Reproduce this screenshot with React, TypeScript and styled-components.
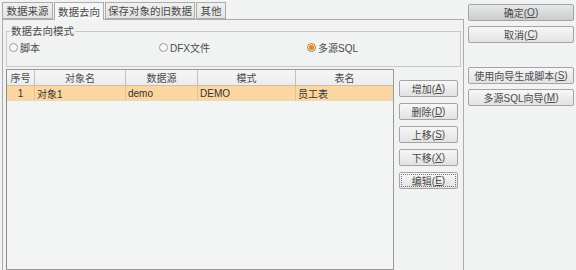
import React from 'react';
import styled, { createGlobalStyle } from 'styled-components';

const GlobalStyle = createGlobalStyle`
  html, body {
    margin: 0;
    padding: 0;
    background: #f1f2f2;
  }
  body {
    font-family: "Liberation Sans", "Noto Sans CJK SC", sans-serif;
    font-size: 10px;
    color: #333;
  }
`;

const Root = styled.div`
  width: 576px;
  height: 270px;
  display: flex;
  overflow: hidden;
  background: #f1f2f2;
`;

const LeftPane = styled.div`
  width: 462px;
  margin-left: 2px;
  display: flex;
  flex-direction: column;
`;

const TabStrip = styled.div`
  height: 19px;
  display: flex;
  align-items: flex-end;
  gap: 1px;
`;

const Tab = styled.div<{ $active?: boolean; $w: number }>`
  width: ${p => p.$w}px;
  height: ${p => (p.$active ? 18 : 17)}px;
  box-sizing: border-box;
  display: flex;
  align-items: center;
  justify-content: center;
  font-size: 10.5px;
  border: 1px solid #acacac;
  border-bottom: ${p => (p.$active ? 'none' : '1px solid #acacac')};
  background: ${p => (p.$active ? '#f5f6f6' : 'linear-gradient(#f0f0f0, #e4e4e4)')};
  color: #4a4a4a;
  margin-bottom: ${p => (p.$active ? '-1px' : '0')};
  position: relative;
  z-index: ${p => (p.$active ? 1 : 0)};
`;

const TabBody = styled.div`
  flex: 1;
  border: 1px solid #acacac;
  border-bottom: none;
  padding: 5px 2px 0 3px;
  display: flex;
  flex-direction: column;
  background: #f1f2f2;
`;

const GroupBox = styled.fieldset`
  margin: 0;
  padding: 3px 0 0 2px;
  border: 1px solid #c8c8c8;
  height: 42px;
  box-sizing: border-box;
  display: flex;
  align-items: center;
`;

const GroupTitle = styled.legend`
  padding: 0 1px;
  margin-left: 1px;
  color: #4a4a4a;
  font-size: 10.5px;
  line-height: 12px;
`;

const RadioRow = styled.div`
  display: grid;
  grid-template-columns: 150px 148px 1fr;
  width: 100%;
  align-items: center;
`;

const RadioItem = styled.label`
  display: flex;
  align-items: center;
  gap: 2px;
  color: #4a4a4a;
`;

const RadioDot = styled.span<{ $checked?: boolean }>`
  width: 7px;
  height: 7px;
  border-radius: 50%;
  border: 1px solid ${p => (p.$checked ? '#b07a3a' : '#9a9a9a')};
  background: ${p => (p.$checked ? 'radial-gradient(circle, #e8892f 0 2.3px, #f6e6d2 2.8px)' : '#fafafa')};
`;

const Body = styled.div`
  flex: 1;
  display: flex;
  gap: 5px;
  margin-top: 2px;
`;

const Table = styled.div`
  width: 388px;
  height: 201px;
  box-sizing: border-box;
  border: 1px solid #9a9a9a;
  border-left-color: #8c8c8c;
  background: #f3f4f4;
`;

const HeaderRow = styled.div`
  display: grid;
  grid-template-columns: 28px 91px 72px 98px 1fr;
  height: 15px;
  background: linear-gradient(#f6f6f6, #ececec);
  border-bottom: 1px solid #c0c0c0;
`;

const HeadCell = styled.div`
  display: flex;
  align-items: center;
  justify-content: center;
  border-right: 1px solid #c0c0c0;
  color: #4a4a4a;
  &:last-child {
    border-right: none;
  }
`;

const DataRow = styled.div`
  display: grid;
  grid-template-columns: 28px 91px 72px 98px 1fr;
  height: 15px;
  background: #fbd6a0;
`;

const Cell = styled.div<{ $center?: boolean }>`
  display: flex;
  align-items: center;
  justify-content: ${p => (p.$center ? 'center' : 'flex-start')};
  padding-left: ${p => (p.$center ? 0 : 2)}px;
  border-right: 1px solid #e0c39a;
  color: #333;
  &:last-child {
    border-right: none;
  }
`;

const SideButtons = styled.div`
  display: flex;
  flex-direction: column;
  gap: 6px;
  padding-top: 11px;
`;

const Button = styled.button<{ $w: number; $primary?: boolean; $focus?: boolean }>`
  width: ${p => p.$w}px;
  height: 17px;
  padding: 0;
  box-sizing: border-box;
  font-family: "Liberation Sans", "Noto Sans CJK SC", sans-serif;
  font-size: 10px;
  color: #4a4a4a;
  border: 1px solid #a4a4a4;
  border-radius: 2px;
  background: ${p =>
    p.$primary ? 'linear-gradient(#e6e8ea, #c9cbce)' : 'linear-gradient(#f7f7f7, #e2e2e2)'};
  outline: ${p => (p.$focus ? '1px dotted #777' : 'none')};
  outline-offset: -3px;
  display: flex;
  align-items: center;
  justify-content: center;
  & u {
    text-decoration: underline;
  }
`;

const RightColumn = styled.div`
  display: flex;
  flex-direction: column;
  margin-left: 4px;
  padding-top: 4px;
  gap: 5px;
`;

const Spacer = styled.div`
  height: 14px;
`;

const columns = ['序号', '对象名', '数据源', '模式', '表名'];

export default function App() {
  return (
    <>
      <GlobalStyle />
      <Root>
        <LeftPane>
          <TabStrip>
            <Tab $w={51}>数据来源</Tab>
            <Tab $w={50} $active>数据去向</Tab>
            <Tab $w={90}>保存对象的旧数据</Tab>
            <Tab $w={30}>其他</Tab>
          </TabStrip>
          <TabBody>
            <GroupBox>
              <GroupTitle>数据去向模式</GroupTitle>
              <RadioRow>
                <RadioItem><RadioDot />脚本</RadioItem>
                <RadioItem><RadioDot />DFX文件</RadioItem>
                <RadioItem><RadioDot $checked />多源SQL</RadioItem>
              </RadioRow>
            </GroupBox>
            <Body>
              <Table>
                <HeaderRow>
                  {columns.map(c => <HeadCell key={c}>{c}</HeadCell>)}
                </HeaderRow>
                <DataRow>
                  <Cell $center>1</Cell>
                  <Cell>对象1</Cell>
                  <Cell>demo</Cell>
                  <Cell>DEMO</Cell>
                  <Cell>员工表</Cell>
                </DataRow>
              </Table>
              <SideButtons>
                <Button $w={59}>增加(<u>A</u>)</Button>
                <Button $w={59}>删除(<u>D</u>)</Button>
                <Button $w={59}>上移(<u>S</u>)</Button>
                <Button $w={59}>下移(<u>X</u>)</Button>
                <Button $w={59} $focus>编辑(<u>E</u>)</Button>
              </SideButtons>
            </Body>
          </TabBody>
        </LeftPane>
        <RightColumn>
          <Button $w={106} $primary>确定(<u>O</u>)</Button>
          <Button $w={106}>取消(<u>C</u>)</Button>
          <Spacer />
          <Button $w={106}>使用向导生成脚本(<u>S</u>)</Button>
          <Button $w={106}>多源SQL向导(<u>M</u>)</Button>
        </RightColumn>
      </Root>
    </>
  );
}
